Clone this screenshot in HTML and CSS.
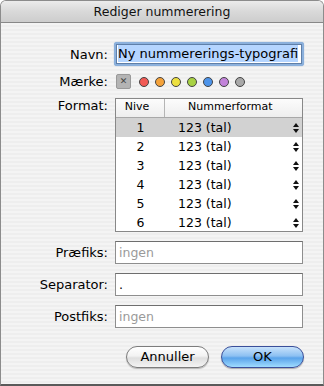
FILE: index.html
```html
<!DOCTYPE html>
<html lang="da">
<head>
<meta charset="utf-8">
<title>Rediger nummerering</title>
<link rel="stylesheet" href="styles.css">
</head>
<body>
<div class="window">
  <div class="titlebar">Rediger nummerering</div>
  <div class="content">
    <div class="row row-name">
      <label class="lbl">Navn:</label>
      <div class="focus"><div class="field name-field"><span class="sel">Ny nummererings-typografi</span></div></div>
    </div>
    <div class="row row-tag">
      <span class="lbl">Mærke:</span>
      <div class="tags">
        <span class="none">&#x2715;</span>
        <span class="dot red"></span>
        <span class="dot orange"></span>
        <span class="dot yellow"></span>
        <span class="dot green"></span>
        <span class="dot blue"></span>
        <span class="dot purple"></span>
        <span class="dot gray"></span>
      </div>
    </div>
    <div class="row row-format">
      <span class="lbl lbl-format">Format:</span>
      <div class="table">
        <div class="thead">
          <div class="th th-level">Nive</div>
          <div class="th th-fmt">Nummerformat</div>
        </div>
        <div class="tr selected"><div class="td td-level">1</div><div class="td td-fmt">123 (tal)</div><div class="stepper"><span class="up"></span><span class="down"></span></div></div>
        <div class="tr"><div class="td td-level">2</div><div class="td td-fmt">123 (tal)</div><div class="stepper"><span class="up"></span><span class="down"></span></div></div>
        <div class="tr"><div class="td td-level">3</div><div class="td td-fmt">123 (tal)</div><div class="stepper"><span class="up"></span><span class="down"></span></div></div>
        <div class="tr"><div class="td td-level">4</div><div class="td td-fmt">123 (tal)</div><div class="stepper"><span class="up"></span><span class="down"></span></div></div>
        <div class="tr"><div class="td td-level">5</div><div class="td td-fmt">123 (tal)</div><div class="stepper"><span class="up"></span><span class="down"></span></div></div>
        <div class="tr"><div class="td td-level">6</div><div class="td td-fmt">123 (tal)</div><div class="stepper"><span class="up"></span><span class="down"></span></div></div>
      </div>
    </div>
    <div class="row row-prefix">
      <span class="lbl">Præfiks:</span>
      <div class="field placeholder">ingen</div>
    </div>
    <div class="row row-sep">
      <span class="lbl">Separator:</span>
      <div class="field">.</div>
    </div>
    <div class="row row-post">
      <span class="lbl">Postfiks:</span>
      <div class="field placeholder">ingen</div>
    </div>
    <div class="buttons">
      <button class="btn cancel">Annuller</button>
      <button class="btn ok">OK</button>
    </div>
  </div>
</div>
</body>
</html>
```
FILE: styles.css
```css
html, body {
  margin: 0;
  padding: 0;
  background: #ffffff;
}
body {
  width: 324px;
  height: 386px;
  overflow: hidden;
  font-family: "DejaVu Sans", "Liberation Sans", sans-serif;
  font-size: 12px;
  color: #000;
}
.window {
  box-sizing: border-box;
  width: 324px;
  height: 386px;
  border: 1px solid #8c8c8c;
  border-bottom: 2px solid #5a5a5a;
  border-radius: 6px 6px 0 0;
  overflow: hidden;
  background: repeating-linear-gradient(to bottom, #eeeeee 0, #eeeeee 2px, #f4f4f4 2px, #f4f4f4 4px);
}
.titlebar {
  height: 21px;
  line-height: 22px;
  text-align: center;
  font-size: 12.5px;
  color: #111;
  border-bottom: 1px solid #888;
  background: linear-gradient(to bottom, #ececec 0%, #d9d9d9 50%, #cdcdcd 100%);
}
.content {
  padding-top: 19px;
}
.row {
  display: flex;
  align-items: center;
}
.lbl {
  width: 107px;
  text-align: right;
  margin-right: 7px;
  flex: none;
  font-size: 13px;
}
.focus {
  box-sizing: border-box;
  width: 190px;
  height: 24px;
  margin-left: -1px;
  padding: 2px;
  border-radius: 3px;
  background: #8bb0dc;
  box-shadow: 0 0 1px #6f98cc;
}
.field {
  box-sizing: border-box;
  width: 188px;
  height: 23px;
  background: #fff;
  border: 1px solid #8e8e8e;
  border-top-color: #6e6e6e;
  padding: 0 3px;
  line-height: 21px;
  font-size: 12.5px;
  white-space: nowrap;
  overflow: hidden;
}
.name-field {
  width: 186px;
  height: 20px;
  line-height: 18px;
  border-color: #5f7fa8;
  padding: 0 1px;
  font-size: 13px;
}
.sel {
  background: #b5d5ff;
  padding: 1px 0 1px;
}
.placeholder {
  color: #9a9a9a;
}
.row-tag {
  margin-top: 8px;
}
.tags {
  display: flex;
  align-items: center;
  gap: 6px;
}
.none {
  box-sizing: border-box;
  width: 15px;
  height: 15px;
  margin-left: 1px;
  margin-right: 2px;
  background: #b4b4b4;
  border: 1px solid #999;
  border-radius: 2px;
  color: #444;
  font-size: 9px;
  line-height: 13px;
  text-align: center;
  font-weight: bold;
}
.dot {
  box-sizing: border-box;
  width: 10px;
  height: 10px;
  border-radius: 50%;
  border: 1px solid #444;
}
.red { background: #f25a55; }
.orange { background: #f4a23a; }
.yellow { background: #ede040; }
.green { background: #a8d244; }
.blue { background: #4d94ea; }
.purple { background: #c283da; }
.gray { background: #a9a9a9; }

.row-format {
  margin-top: 9px;
  align-items: flex-start;
}
.lbl-format {
  line-height: 16px;
  margin-top: 0;
}
.table {
  box-sizing: border-box;
  width: 188px;
  height: 134px;
  border: 1px solid #888;
  background: #fff;
}
.thead {
  display: flex;
  height: 18px;
  border-bottom: 1px solid #a8a8a8;
  background: linear-gradient(to bottom, #fcfcfc, #eeeeee);
  font-size: 11px;
  line-height: 16px;
}
.th-level {
  width: 49px;
  text-align: center;
  border-right: 1px solid #b5b5b5;
  box-sizing: border-box;
  padding-right: 6px;
}
.th-fmt {
  flex: 1;
  text-align: left;
  padding-left: 23px;
}
.tr {
  display: flex;
  align-items: center;
  height: 19px;
  line-height: 19px;
  font-size: 12.5px;
}
.tr.selected {
  background: #d2d2d2;
}
.td-level {
  width: 49px;
  text-align: center;
}
.td-fmt {
  flex: 1;
  padding-left: 13px;
}
.stepper {
  width: 6px;
  margin-right: 3px;
  display: flex;
  flex-direction: column;
  align-items: center;
  gap: 2px;
}
.up, .down {
  width: 0;
  height: 0;
  border-left: 3px solid transparent;
  border-right: 3px solid transparent;
}
.up { border-bottom: 4px solid #111; }
.down { border-top: 4px solid #111; }

.row-prefix { margin-top: 9px; }
.row-sep { margin-top: 9px; }
.row-post { margin-top: 9px; }

.buttons {
  display: flex;
  justify-content: flex-end;
  gap: 12px;
  margin-top: 18px;
  padding-right: 19px;
}
.btn {
  box-sizing: border-box;
  width: 83px;
  height: 22px;
  border-radius: 11px;
  font-family: "DejaVu Sans", "Liberation Sans", sans-serif;
  font-size: 13px;
  color: #000;
  padding: 0;
  line-height: 20px;
}
.cancel {
  border: 1px solid #7c7c7c;
  background: linear-gradient(to bottom, #ffffff 0%, #f2f2f2 45%, #dedede 55%, #f4f4f4 100%);
  box-shadow: 0 1px 1px rgba(0,0,0,0.25);
}
.ok {
  border: 1px solid #3a4f9a;
  background: linear-gradient(to bottom, #c8e2fb 0%, #8cc0f2 45%, #5aa3ea 55%, #9fdcff 100%);
  box-shadow: 0 1px 1px rgba(0,0,0,0.3);
}
```
